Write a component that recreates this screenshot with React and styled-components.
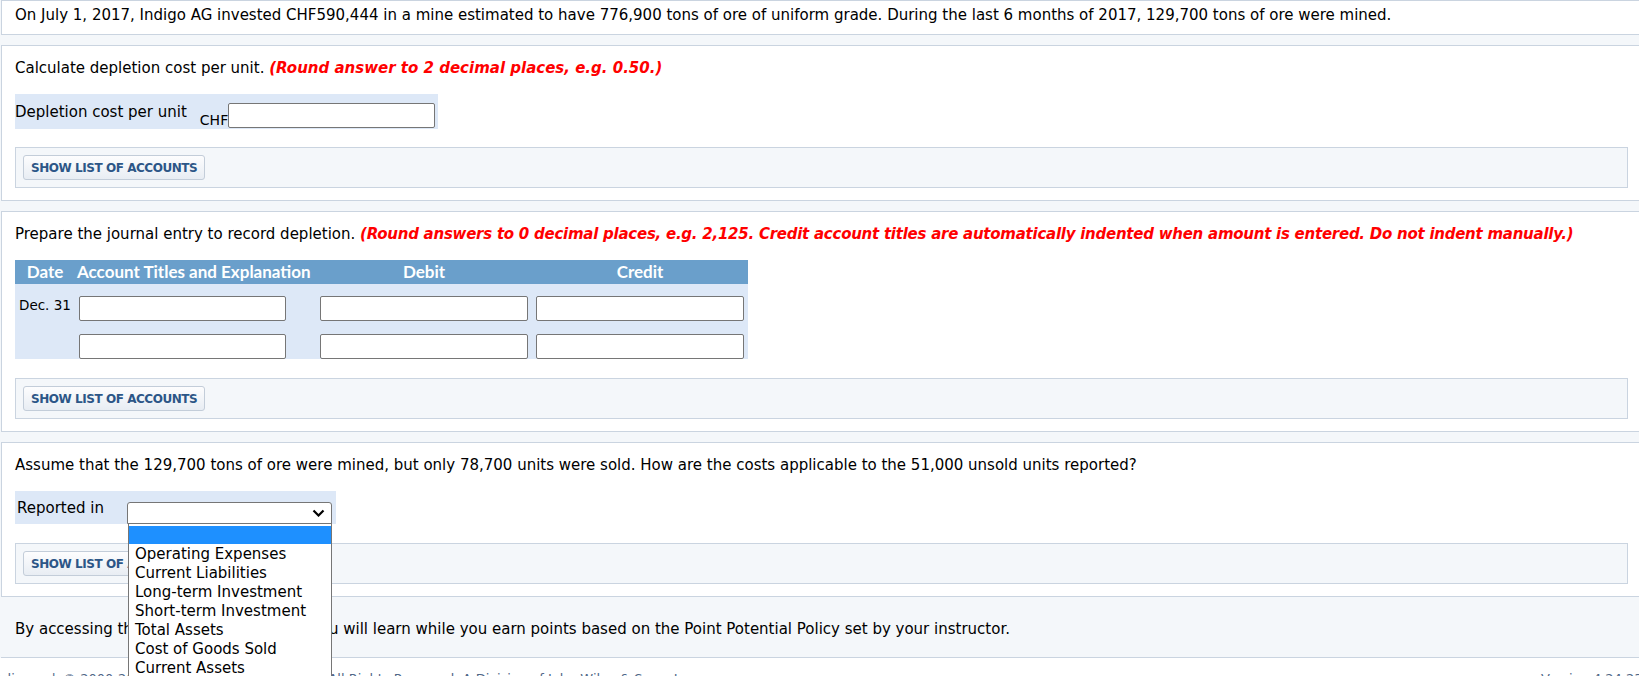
import React from 'react';
import styled, {createGlobalStyle} from 'styled-components';

const GlobalStyle = createGlobalStyle`
  html, body {
    margin: 0;
    padding: 0;
    background: #fff;
    overflow: hidden;
  }
  body {
    font-family: "DejaVu Sans", Verdana, sans-serif;
    font-size: 15px;
    color: #000;
  }
`;

const Page = styled.div`
  background: #f4f7fa;
  padding-left: 1px;
  width: 1642px;
`;

const Panel = styled.section`
  box-sizing: border-box;
  width: 1641px;
  background: #fff;
  border: 1px solid #cad4e0;
  padding: ${(p) => (p.$intro ? '5px 13px 10px' : '13px 13px 12px')};
  margin-bottom: ${(p) => (p.$last ? '0' : '10px')};
`;

const Text = styled.p`
  margin: 0 0 ${(p) => p.$gap || 0}px;
  line-height: 18px;
  white-space: nowrap;
`;

const Hint = styled.span`
  color: #f00;
  font-weight: bold;
  font-style: italic;
  letter-spacing: ${(p) => (p.$tight ? '-0.25px' : '0')};
`;

const AnswerRow = styled.div`
  display: flex;
  align-items: flex-start;
  width: fit-content;
  background: #dde8f7;
  padding: ${(p) => p.$pad};
  margin-bottom: ${(p) => p.$gap}px;
`;

const Label = styled.span`
  line-height: 18px;
  width: ${(p) => (p.$width ? `${p.$width}px` : 'auto')};
`;

const Amount = styled.div`
  display: flex;
  align-items: flex-end;
  align-self: stretch;
  margin-left: 13px;
`;

const Unit = styled.span`
  font-size: 14px;
  line-height: 15px;
`;

const TextBox = styled.input`
  box-sizing: border-box;
  width: ${(p) => (p.$width ? `${p.$width}px` : '100%')};
  height: 25px;
  margin: 0;
  border: 1px solid #767676;
  border-radius: 2px;
  background: #fff;
  font: inherit;
`;

const AccountsBar = styled.div`
  background: #f4f7fa;
  border: 1px solid #cad4e0;
  padding: 7px;
`;

const AccountsButton = styled.button`
  box-sizing: border-box;
  height: 25px;
  padding: 0 7px;
  border: 1px solid #c3cdd9;
  border-radius: 3px;
  background: linear-gradient(#fdfdfe, #e8edf3);
  color: #2c5687;
  font-family: "DejaVu Sans", Verdana, sans-serif;
  font-weight: bold;
  font-size: 12px;
  letter-spacing: -0.45px;
  cursor: pointer;
`;

const Journal = styled.div`
  display: grid;
  grid-template-columns: 60px 215px 26px 216px 216px;
  width: 733px;
  background: #dde8f7;
  margin-bottom: 19px;
`;

const HeadCell = styled.div`
  grid-column: span ${(p) => p.$span || 1};
  background: #6a9fcb;
  color: #fff;
  font-family: Lato, "Liberation Sans", sans-serif;
  font-weight: bold;
  font-size: 17px;
  line-height: 24px;
  height: 24px;
  text-align: ${(p) => p.$align || 'center'};
  padding-left: ${(p) => p.$indent || 0}px;
  white-space: nowrap;
`;

const Cell = styled.div`
  grid-column: span ${(p) => p.$span || 1};
  padding: ${(p) => p.$top}px 4px 0;
`;

const DateText = styled.div`
  font-size: 13.5px;
  line-height: 16px;
  padding: 1px 0 0 0;
`;

const SelectWrap = styled.div`
  position: relative;
  margin-top: 3px;
`;

const SelectBox = styled.div`
  box-sizing: border-box;
  width: 205px;
  height: 22px;
  border: 1px solid #767676;
  border-radius: 3px 3px 0 0;
  background: #fff;
  display: flex;
  align-items: center;
  justify-content: flex-end;
  padding-right: 6px;
`;

const OptionList = styled.ul`
  position: absolute;
  top: 21px;
  left: 1px;
  width: 204px;
  box-sizing: border-box;
  margin: 0;
  padding: 2px 0 0;
  list-style: none;
  background: #fff;
  border: 1px solid #767676;
  z-index: 5;
`;

const Option = styled.li`
  height: ${(p) => (p.$active ? 18 : 19)}px;
  line-height: 19px;
  padding-left: 6px;
  white-space: nowrap;
  background: ${(p) => (p.$active ? '#1e90ff' : 'transparent')};
  color: ${(p) => (p.$active ? '#fff' : '#000')};
  margin-bottom: ${(p) => (p.$active ? 1 : 0)}px;
`;

const PointsNote = styled.div`
  padding: 23px 14px 19px;
  border-bottom: 1px solid #cad4e0;
  line-height: 18px;
  white-space: nowrap;
`;

const Legal = styled.div`
  display: flex;
  background: #fff;
  padding-top: 13px;
  font-size: 13px;
  line-height: 16px;
  color: #4f6787;
  white-space: nowrap;
`;

const LegalText = styled.span`
  flex: 0 0 1600px;
  margin-left: -59px;
`;

const Separator = styled.span`
  margin: 0 7px 0 22px;
`;

const Chevron = () => (
  <svg width="13" height="8" viewBox="0 0 13 8">
    <polyline points="1.5,1.5 6.5,6.5 11.5,1.5" fill="none" stroke="#000" strokeWidth="2.2" />
  </svg>
);

const ShowAccounts = () => (
  <AccountsBar>
    <AccountsButton type="button">SHOW LIST OF ACCOUNTS</AccountsButton>
  </AccountsBar>
);

const options = [
  '',
  'Operating Expenses',
  'Current Liabilities',
  'Long-term Investment',
  'Short-term Investment',
  'Total Assets',
  'Cost of Goods Sold',
  'Current Assets',
  'Inventory',
];

export default function App() {
  return (
    <>
      <GlobalStyle />
      <Page>
        <Panel $intro>
          <Text>
            On July 1, 2017, Indigo AG invested CHF590,444 in a mine estimated to have 776,900 tons of ore of uniform grade. During the last 6 months of 2017, 129,700 tons of ore were mined.
          </Text>
        </Panel>

        <Panel>
          <Text $gap={17}>
            Calculate depletion cost per unit. <Hint>(Round answer to 2 decimal places, e.g. 0.50.)</Hint>
          </Text>
          <AnswerRow $pad="9px 3px 1px 0" $gap={18}>
            <Label>Depletion cost per unit</Label>
            <Amount>
              <Unit>CHF</Unit>
              <TextBox $width={207} />
            </Amount>
          </AnswerRow>
          <ShowAccounts />
        </Panel>

        <Panel>
          <Text $gap={17}>
            Prepare the journal entry to record depletion.{' '}
            <Hint $tight>
              (Round answers to 0 decimal places, e.g. 2,125. Credit account titles are automatically indented when amount is entered. Do not indent manually.)
            </Hint>
          </Text>
          <Journal>
            <HeadCell>Date</HeadCell>
            <HeadCell $span={2} $align="left" $indent={2}>Account Titles and Explanation</HeadCell>
            <HeadCell>Debit</HeadCell>
            <HeadCell>Credit</HeadCell>

            <Cell $top={12}><DateText>Dec. 31</DateText></Cell>
            <Cell $top={12}><TextBox /></Cell>
            <Cell $top={12} />
            <Cell $top={12}><TextBox /></Cell>
            <Cell $top={12}><TextBox /></Cell>

            <Cell $top={13} />
            <Cell $top={13}><TextBox /></Cell>
            <Cell $top={13} />
            <Cell $top={13}><TextBox /></Cell>
            <Cell $top={13}><TextBox /></Cell>
          </Journal>
          <ShowAccounts />
        </Panel>

        <Panel $last>
          <Text $gap={17}>
            Assume that the 129,700 tons of ore were mined, but only 78,700 units were sold. How are the costs applicable to the 51,000 unsold units reported?
          </Text>
          <AnswerRow $pad="8px 4px 0 2px" $gap={19}>
            <Label $width={110}>Reported in</Label>
            <SelectWrap>
              <SelectBox>
                <Chevron />
              </SelectBox>
              <OptionList>
                {options.map((o, i) => (
                  <Option key={i} $active={i === 0}>{o}</Option>
                ))}
              </OptionList>
            </SelectWrap>
          </AnswerRow>
          <ShowAccounts />
        </Panel>

        <PointsNote>
          By accessing this Question Assistance, you will learn while you earn points based on the Point Potential Policy set by your instructor.
        </PointsNote>
      </Page>
      <Legal>
        <LegalText>
          Privacy Policy<Separator>|</Separator>© 2000-2021 by John Wiley &amp; Sons, Inc. All Rights Reserved. A Division of John Wiley &amp; Sons, Inc.
        </LegalText>
        <span>Version 4.24.23.1</span>
      </Legal>
    </>
  );
}
